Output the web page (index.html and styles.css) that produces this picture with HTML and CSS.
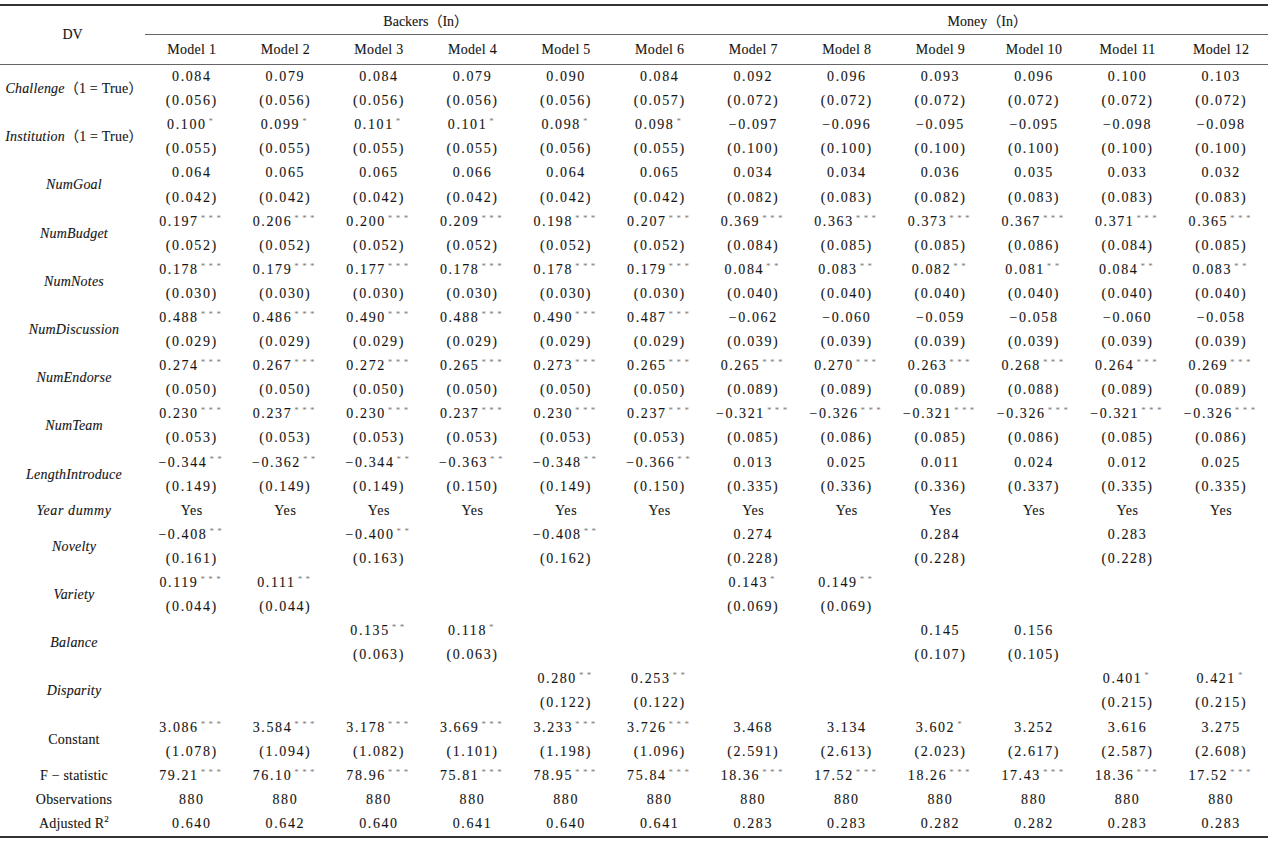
FILE: index.html
```html
<!DOCTYPE html>
<html lang="en">
<head>
<meta charset="utf-8">
<title>Regression results</title>
<link rel="stylesheet" href="styles.css">
</head>
<body>
<table class="reg">
<colgroup>
<col class="c-lab">
<col><col><col><col><col><col><col><col><col><col><col><col>
</colgroup>
<thead>
<tr class="grp">
<th rowspan="2" class="dv">DV</th>
<th colspan="6" class="span">Backers（In）</th>
<th colspan="6" class="span">Money（In）</th>
</tr>
<tr class="mod">
<th>Model 1</th><th>Model 2</th><th>Model 3</th><th>Model 4</th><th>Model 5</th><th>Model 6</th>
<th>Model 7</th><th>Model 8</th><th>Model 9</th><th>Model 10</th><th>Model 11</th><th>Model 12</th>
</tr>
</thead>
<tbody>
<tr>
<td rowspan="2" class="lab"><i>Challenge</i>（1 = True）</td>
<td>0.084</td><td>0.079</td><td>0.084</td><td>0.079</td><td>0.090</td><td>0.084</td>
<td>0.092</td><td>0.096</td><td>0.093</td><td>0.096</td><td>0.100</td><td>0.103</td>
</tr>
<tr class="se">
<td>(0.056)</td><td>(0.056)</td><td>(0.056)</td><td>(0.056)</td><td>(0.056)</td><td>(0.057)</td>
<td>(0.072)</td><td>(0.072)</td><td>(0.072)</td><td>(0.072)</td><td>(0.072)</td><td>(0.072)</td>
</tr>
<tr>
<td rowspan="2" class="lab"><i>Institution</i>（1 = True）</td>
<td>0.100<sup>*</sup></td><td>0.099<sup>*</sup></td><td>0.101<sup>*</sup></td><td>0.101<sup>*</sup></td><td>0.098<sup>*</sup></td><td>0.098<sup>*</sup></td>
<td>−0.097</td><td>−0.096</td><td>−0.095</td><td>−0.095</td><td>−0.098</td><td>−0.098</td>
</tr>
<tr class="se">
<td>(0.055)</td><td>(0.055)</td><td>(0.055)</td><td>(0.055)</td><td>(0.056)</td><td>(0.055)</td>
<td>(0.100)</td><td>(0.100)</td><td>(0.100)</td><td>(0.100)</td><td>(0.100)</td><td>(0.100)</td>
</tr>
<tr>
<td rowspan="2" class="lab"><i>NumGoal</i></td>
<td>0.064</td><td>0.065</td><td>0.065</td><td>0.066</td><td>0.064</td><td>0.065</td>
<td>0.034</td><td>0.034</td><td>0.036</td><td>0.035</td><td>0.033</td><td>0.032</td>
</tr>
<tr class="se">
<td>(0.042)</td><td>(0.042)</td><td>(0.042)</td><td>(0.042)</td><td>(0.042)</td><td>(0.042)</td>
<td>(0.082)</td><td>(0.083)</td><td>(0.082)</td><td>(0.083)</td><td>(0.083)</td><td>(0.083)</td>
</tr>
<tr>
<td rowspan="2" class="lab"><i>NumBudget</i></td>
<td>0.197<sup>***</sup></td><td>0.206<sup>***</sup></td><td>0.200<sup>***</sup></td><td>0.209<sup>***</sup></td><td>0.198<sup>***</sup></td><td>0.207<sup>***</sup></td>
<td>0.369<sup>***</sup></td><td>0.363<sup>***</sup></td><td>0.373<sup>***</sup></td><td>0.367<sup>***</sup></td><td>0.371<sup>***</sup></td><td>0.365<sup>***</sup></td>
</tr>
<tr class="se">
<td>(0.052)</td><td>(0.052)</td><td>(0.052)</td><td>(0.052)</td><td>(0.052)</td><td>(0.052)</td>
<td>(0.084)</td><td>(0.085)</td><td>(0.085)</td><td>(0.086)</td><td>(0.084)</td><td>(0.085)</td>
</tr>
<tr>
<td rowspan="2" class="lab"><i>NumNotes</i></td>
<td>0.178<sup>***</sup></td><td>0.179<sup>***</sup></td><td>0.177<sup>***</sup></td><td>0.178<sup>***</sup></td><td>0.178<sup>***</sup></td><td>0.179<sup>***</sup></td>
<td>0.084<sup>**</sup></td><td>0.083<sup>**</sup></td><td>0.082<sup>**</sup></td><td>0.081<sup>**</sup></td><td>0.084<sup>**</sup></td><td>0.083<sup>**</sup></td>
</tr>
<tr class="se">
<td>(0.030)</td><td>(0.030)</td><td>(0.030)</td><td>(0.030)</td><td>(0.030)</td><td>(0.030)</td>
<td>(0.040)</td><td>(0.040)</td><td>(0.040)</td><td>(0.040)</td><td>(0.040)</td><td>(0.040)</td>
</tr>
<tr>
<td rowspan="2" class="lab"><i>NumDiscussion</i></td>
<td>0.488<sup>***</sup></td><td>0.486<sup>***</sup></td><td>0.490<sup>***</sup></td><td>0.488<sup>***</sup></td><td>0.490<sup>***</sup></td><td>0.487<sup>***</sup></td>
<td>−0.062</td><td>−0.060</td><td>−0.059</td><td>−0.058</td><td>−0.060</td><td>−0.058</td>
</tr>
<tr class="se">
<td>(0.029)</td><td>(0.029)</td><td>(0.029)</td><td>(0.029)</td><td>(0.029)</td><td>(0.029)</td>
<td>(0.039)</td><td>(0.039)</td><td>(0.039)</td><td>(0.039)</td><td>(0.039)</td><td>(0.039)</td>
</tr>
<tr>
<td rowspan="2" class="lab"><i>NumEndorse</i></td>
<td>0.274<sup>***</sup></td><td>0.267<sup>***</sup></td><td>0.272<sup>***</sup></td><td>0.265<sup>***</sup></td><td>0.273<sup>***</sup></td><td>0.265<sup>***</sup></td>
<td>0.265<sup>***</sup></td><td>0.270<sup>***</sup></td><td>0.263<sup>***</sup></td><td>0.268<sup>***</sup></td><td>0.264<sup>***</sup></td><td>0.269<sup>***</sup></td>
</tr>
<tr class="se">
<td>(0.050)</td><td>(0.050)</td><td>(0.050)</td><td>(0.050)</td><td>(0.050)</td><td>(0.050)</td>
<td>(0.089)</td><td>(0.089)</td><td>(0.089)</td><td>(0.088)</td><td>(0.089)</td><td>(0.089)</td>
</tr>
<tr>
<td rowspan="2" class="lab"><i>NumTeam</i></td>
<td>0.230<sup>***</sup></td><td>0.237<sup>***</sup></td><td>0.230<sup>***</sup></td><td>0.237<sup>***</sup></td><td>0.230<sup>***</sup></td><td>0.237<sup>***</sup></td>
<td>−0.321<sup>***</sup></td><td>−0.326<sup>***</sup></td><td>−0.321<sup>***</sup></td><td>−0.326<sup>***</sup></td><td>−0.321<sup>***</sup></td><td>−0.326<sup>***</sup></td>
</tr>
<tr class="se">
<td>(0.053)</td><td>(0.053)</td><td>(0.053)</td><td>(0.053)</td><td>(0.053)</td><td>(0.053)</td>
<td>(0.085)</td><td>(0.086)</td><td>(0.085)</td><td>(0.086)</td><td>(0.085)</td><td>(0.086)</td>
</tr>
<tr>
<td rowspan="2" class="lab"><i>LengthIntroduce</i></td>
<td>−0.344<sup>**</sup></td><td>−0.362<sup>**</sup></td><td>−0.344<sup>**</sup></td><td>−0.363<sup>**</sup></td><td>−0.348<sup>**</sup></td><td>−0.366<sup>**</sup></td>
<td>0.013</td><td>0.025</td><td>0.011</td><td>0.024</td><td>0.012</td><td>0.025</td>
</tr>
<tr class="se">
<td>(0.149)</td><td>(0.149)</td><td>(0.149)</td><td>(0.150)</td><td>(0.149)</td><td>(0.150)</td>
<td>(0.335)</td><td>(0.336)</td><td>(0.336)</td><td>(0.337)</td><td>(0.335)</td><td>(0.335)</td>
</tr>
<tr class="yes">
<td class="lab"><i class="wide">Year dummy</i></td>
<td>Yes</td><td>Yes</td><td>Yes</td><td>Yes</td><td>Yes</td><td>Yes</td>
<td>Yes</td><td>Yes</td><td>Yes</td><td>Yes</td><td>Yes</td><td>Yes</td>
</tr>
<tr>
<td rowspan="2" class="lab"><i>Novelty</i></td>
<td>−0.408<sup>**</sup></td><td></td><td>−0.400<sup>**</sup></td><td></td><td>−0.408<sup>**</sup></td><td></td>
<td>0.274</td><td></td><td>0.284</td><td></td><td>0.283</td><td></td>
</tr>
<tr class="se">
<td>(0.161)</td><td></td><td>(0.163)</td><td></td><td>(0.162)</td><td></td>
<td>(0.228)</td><td></td><td>(0.228)</td><td></td><td>(0.228)</td><td></td>
</tr>
<tr>
<td rowspan="2" class="lab"><i>Variety</i></td>
<td>0.119<sup>***</sup></td><td>0.111<sup>**</sup></td><td></td><td></td><td></td><td></td>
<td>0.143<sup>*</sup></td><td>0.149<sup>**</sup></td><td></td><td></td><td></td><td></td>
</tr>
<tr class="se">
<td>(0.044)</td><td>(0.044)</td><td></td><td></td><td></td><td></td>
<td>(0.069)</td><td>(0.069)</td><td></td><td></td><td></td><td></td>
</tr>
<tr>
<td rowspan="2" class="lab"><i>Balance</i></td>
<td></td><td></td><td>0.135<sup>**</sup></td><td>0.118<sup>*</sup></td><td></td><td></td>
<td></td><td></td><td>0.145</td><td>0.156</td><td></td><td></td>
</tr>
<tr class="se">
<td></td><td></td><td>(0.063)</td><td>(0.063)</td><td></td><td></td>
<td></td><td></td><td>(0.107)</td><td>(0.105)</td><td></td><td></td>
</tr>
<tr>
<td rowspan="2" class="lab"><i>Disparity</i></td>
<td></td><td></td><td></td><td></td><td>0.280<sup>**</sup></td><td>0.253<sup>**</sup></td>
<td></td><td></td><td></td><td></td><td>0.401<sup>*</sup></td><td>0.421<sup>*</sup></td>
</tr>
<tr class="se">
<td></td><td></td><td></td><td></td><td>(0.122)</td><td>(0.122)</td>
<td></td><td></td><td></td><td></td><td>(0.215)</td><td>(0.215)</td>
</tr>
<tr>
<td rowspan="2" class="lab">Constant</td>
<td>3.086<sup>***</sup></td><td>3.584<sup>***</sup></td><td>3.178<sup>***</sup></td><td>3.669<sup>***</sup></td><td>3.233<sup>***</sup></td><td>3.726<sup>***</sup></td>
<td>3.468</td><td>3.134</td><td>3.602<sup>*</sup></td><td>3.252</td><td>3.616</td><td>3.275</td>
</tr>
<tr class="se">
<td>(1.078)</td><td>(1.094)</td><td>(1.082)</td><td>(1.101)</td><td>(1.198)</td><td>(1.096)</td>
<td>(2.591)</td><td>(2.613)</td><td>(2.023)</td><td>(2.617)</td><td>(2.587)</td><td>(2.608)</td>
</tr>
<tr>
<td class="lab">F − statistic</td>
<td>79.21<sup>***</sup></td><td>76.10<sup>***</sup></td><td>78.96<sup>***</sup></td><td>75.81<sup>***</sup></td><td>78.95<sup>***</sup></td><td>75.84<sup>***</sup></td>
<td>18.36<sup>***</sup></td><td>17.52<sup>***</sup></td><td>18.26<sup>***</sup></td><td>17.43<sup>***</sup></td><td>18.36<sup>***</sup></td><td>17.52<sup>***</sup></td>
</tr>
<tr>
<td class="lab">Observations</td>
<td>880</td><td>880</td><td>880</td><td>880</td><td>880</td><td>880</td>
<td>880</td><td>880</td><td>880</td><td>880</td><td>880</td><td>880</td>
</tr>
<tr>
<td class="lab">Adjusted R<span class="sq">2</span></td>
<td>0.640</td><td>0.642</td><td>0.640</td><td>0.641</td><td>0.640</td><td>0.641</td>
<td>0.283</td><td>0.283</td><td>0.282</td><td>0.282</td><td>0.283</td><td>0.283</td>
</tr>
</tbody>
</table>
</body>
</html>
```

FILE: styles.css
```css
html, body {
  margin: 0;
  padding: 0;
  background: #ffffff;
}

body {
  color: #141414;
  font-family: "Liberation Serif", "Noto Sans CJK SC", serif;
  font-size: 14px;
  padding-top: 4px;
  -webkit-text-stroke: 0.1px #141414;
}

.reg {
  width: 1268px;
  table-layout: fixed;
  border-collapse: collapse;
  border-top: 2px solid #333333;
  border-bottom: 2px solid #333333;
}

.c-lab {
  width: 145px;
}

.reg th,
.reg td {
  padding: 0;
  text-align: center;
  vertical-align: middle;
  font-weight: normal;
  white-space: nowrap;
}

.grp th {
  height: 28px;
}

.grp .span {
  border-bottom: 1px solid #666666;
}

.mod th {
  height: 29px;
  letter-spacing: 0.3px;
  border-bottom: 1px solid #666666;
}

.dv {
  border-bottom: 1px solid #666666;
}

.reg tbody td {
  height: 24.1px;
  line-height: 20px;
  letter-spacing: 1.6px;
}

.reg tbody td.lab {
  font-size: 14px;
  letter-spacing: 0.2px;
  padding-left: 3px;
}

.reg tbody tr.se td {
  letter-spacing: 1.6px;
}

.reg tbody tr.yes td {
  letter-spacing: 0.6px;
}

.lab i {
  font-style: italic;
}

.lab i.wide {
  letter-spacing: 0.6px;
}

.reg sup {
  font-size: 9px;
  color: #7c7c7c;
  -webkit-text-stroke: 0;
  letter-spacing: 3.4px;
  vertical-align: 5px;
  line-height: 0;
  margin-left: 2px;
}

.sq {
  font-size: 9px;
  vertical-align: 6px;
  line-height: 0;
}
```
